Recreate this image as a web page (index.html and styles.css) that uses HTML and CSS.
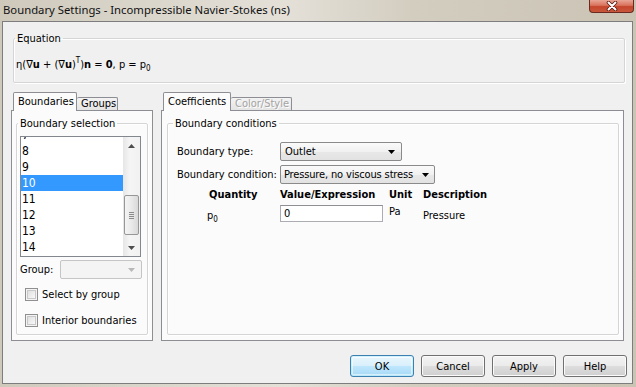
FILE: index.html
```html
<!DOCTYPE html>
<html>
<head>
<meta charset="utf-8">
<title>Boundary Settings</title>
<link rel="stylesheet" href="styles.css">
</head>
<body>
<div class="window">
  <div class="titlebar">
    <span class="title">Boundary Settings - Incompressible Navier-Stokes (ns)</span>
    <div class="close">
      <svg width="14" height="10" viewBox="0 0 14 10"><path d="M3.5 1.5 L10.5 8.5 M10.5 1.5 L3.5 8.5" stroke="#5a1a10" stroke-width="3.6" stroke-linecap="round"/><path d="M3.5 1.5 L10.5 8.5 M10.5 1.5 L3.5 8.5" stroke="#fff" stroke-width="2" stroke-linecap="round"/></svg>
    </div>
  </div>
  <div class="client">
    <fieldset class="group eq-group">
      <legend>Equation</legend>
      <div class="equation">η(∇<b>u</b> + (∇<b>u</b>)<sup>T</sup>)<b>n</b> = <b>0</b>, p = p<sub>0</sub></div>
    </fieldset>

    <div class="main">
      <section class="tabset tabset-left">
        <div class="tabs">
          <div class="tab active">Boundaries</div>
          <div class="tab">Groups</div>
        </div>
        <div class="panel">
          <fieldset class="group sel-group">
            <legend>Boundary selection</legend>
            <div class="listbox">
              <div class="items">
                <div class="items-inner">
                  <div class="item">7</div>
                  <div class="item">8</div>
                  <div class="item">9</div>
                  <div class="item selected">10</div>
                  <div class="item">11</div>
                  <div class="item">12</div>
                  <div class="item">13</div>
                  <div class="item">14</div>
                </div>
              </div>
              <div class="vscroll">
                <div class="sbtn"><svg width="7" height="4" viewBox="0 0 7 4"><path d="M0 4 L3.5 0 L7 4 Z" fill="#4d4d4d"/></svg></div>
                <div class="track">
                  <div class="thumb"><i></i><i></i><i></i><i></i></div>
                </div>
                <div class="sbtn"><svg width="7" height="4" viewBox="0 0 7 4"><path d="M0 0 L7 0 L3.5 4 Z" fill="#4d4d4d"/></svg></div>
              </div>
            </div>
            <div class="group-row">
              <span class="lbl">Group:</span>
              <div class="combo combo-disabled"><span class="combo-text"></span><svg width="7" height="4" viewBox="0 0 7 4"><path d="M0 0 L7 0 L3.5 4 Z" fill="#b8b8b8"/></svg></div>
            </div>
            <label class="check"><span class="box"></span>Select by group</label>
            <label class="check check-second"><span class="box"></span>Interior boundaries</label>
          </fieldset>
        </div>
      </section>

      <section class="tabset tabset-right">
        <div class="tabs">
          <div class="tab active">Coefficients</div>
          <div class="tab disabled">Color/Style</div>
        </div>
        <div class="panel">
          <fieldset class="group bc-group">
            <legend>Boundary conditions</legend>
            <div class="form-row first">
              <span class="form-label">Boundary type:</span>
              <div class="combo combo-type"><span class="combo-text">Outlet</span><svg width="7" height="4" viewBox="0 0 7 4"><path d="M0 0 L7 0 L3.5 4 Z" fill="#000"/></svg></div>
            </div>
            <div class="form-row">
              <span class="form-label">Boundary condition:</span>
              <div class="combo combo-cond"><span class="combo-text">Pressure, no viscous stress</span><svg width="7" height="4" viewBox="0 0 7 4"><path d="M0 0 L7 0 L3.5 4 Z" fill="#000"/></svg></div>
            </div>
            <div class="qtable">
              <div class="qh">Quantity</div>
              <div class="qh">Value/Expression</div>
              <div class="qh">Unit</div>
              <div class="qh">Description</div>
              <div class="qc qname">p<sub>0</sub></div>
              <div class="qc"><div class="input">0</div></div>
              <div class="qc qunit">Pa</div>
              <div class="qc qdesc">Pressure</div>
            </div>
          </fieldset>
        </div>
      </section>
    </div>

    <div class="buttons">
      <button class="btn btn-default">OK</button>
      <button class="btn">Cancel</button>
      <button class="btn">Apply</button>
      <button class="btn">Help</button>
    </div>
  </div>
</div>
</body>
</html>
```

FILE: styles.css
```css
* { box-sizing: border-box; }
html, body { margin: 0; padding: 0; }
body {
  width: 636px;
  height: 387px;
  overflow: hidden;
  font-family: "DejaVu Sans Condensed", "DejaVu Sans", sans-serif;
  font-stretch: condensed;
  font-size: 11px;
  color: #000;
  background: #cdc4b1;
}
.window {
  width: 636px;
  height: 387px;
  display: flex;
  flex-direction: column;
  background: linear-gradient(90deg, #cfc9bc 0%, #d9d4c9 20%, #e4e0d8 45%, #d3cdc0 65%, #cbc4b5 100%);
}
.titlebar {
  height: 21px;
  display: flex;
  justify-content: space-between;
  align-items: flex-start;
  padding-left: 3px;
}
.title {
  font-family: "Noto Sans", "Open Sans", sans-serif;
  font-stretch: normal;
  font-size: 11.3px;
  line-height: 20px;
  color: #111;
}
.close {
  width: 45px;
  height: 13px;
  margin-right: 2px;
  border: 1px solid #6a2a20;
  border-top: none;
  border-radius: 0 0 4px 4px;
  background: linear-gradient(#e9a595 0%, #d8725c 45%, #c4452c 55%, #c9573c 100%);
  display: flex;
  align-items: center;
  justify-content: center;
}
.client {
  flex: 1;
  margin: 0 3px 3px 2px;
  border: 1px solid #7d7d7d;
  background: #f0f0f0;
  display: flex;
  flex-direction: column;
}

/* group boxes */
.group {
  margin: 0;
  padding: 0;
  min-width: 0;
  border: 1px solid #d5d5d5;
  border-radius: 2px;
  box-shadow: 1px 1px 0 #fff, inset 1px 1px 0 #fff;
}
.group legend {
  padding: 0 2px;
  margin-left: 1px;
  line-height: 13px;
}
.eq-group {
  margin: 10px 7px 0 10px;
  height: 51px;
}
.eq-group legend { margin-left: 1px; }
.equation {
  padding: 12px 0 0 2px;
  font-size: 11px;
  line-height: 16px;
}
.equation sup { font-size: 8px; vertical-align: 5px; line-height: 0; }
.equation sub, .qname sub { font-size: 8px; vertical-align: -3px; line-height: 0; }

/* tabs */
.main {
  display: flex;
  margin-top: 9px;
}
.tabset { display: flex; flex-direction: column; }
.tabset-left { margin-left: 8px; width: 142px; }
.tabset-right { margin-left: 8px; width: 463px; }
.tabs {
  display: flex;
  align-items: flex-end;
  height: 18px;
  padding-left: 2px;
}
.tab {
  height: 13px;
  padding: 0 4px;
  border: 1px solid #8c8e94;
  border-bottom: none;
  border-left: none;
  background: linear-gradient(#f3f3f3, #e4e4e4);
  line-height: 12px;
  border-radius: 2px 2px 0 0;
}
.tab.active {
  position: relative;
  z-index: 1;
  height: 19px;
  margin-bottom: -1px;
  border-left: 1px solid #8c8e94;
  background: #fbfbfb;
  line-height: 17px;
  padding: 0 4px;
}
.tabset-left .tab.active { width: 64px; }
.tabset-left .tab { width: 41px; }
.tabset-right .tab.active { width: 68px; }
.tabset-right .tab { width: 61px; }
.tab.disabled {
  color: #a3a3a3;
  text-shadow: 1px 1px 0 #fff;
}
.panel {
  height: 231px;
  border: 1px solid #8c8e94;
  background: #fbfbfb;
}
.sel-group {
  margin: 6px 4px 0 4px;
  height: 218px;
}

/* listbox */
.listbox {
  margin: 6px 0 0 3px;
  width: 121px;
  height: 121px;
  border: 1px solid #828790;
  background: #fff;
  display: flex;
}
.items {
  flex: 1;
  overflow: hidden;
}
.items-inner { margin-top: -10px; }
.item {
  height: 16px;
  line-height: 16px;
  padding-left: 1px;
  font-size: 12px;
}
.item.selected {
  background: #3399ff;
  color: #fff;
}
.vscroll {
  width: 17px;
  display: flex;
  flex-direction: column;
  background: linear-gradient(90deg, #e6e6e6, #f5f5f5 40%, #f1f1f1);
}
.sbtn {
  height: 17px;
  display: flex;
  align-items: center;
  justify-content: center;
}
.track { flex: 1; }
.thumb {
  margin: 41px 1px 0 1px;
  height: 40px;
  border: 1px solid #979797;
  border-radius: 2px;
  background: linear-gradient(90deg, #f4f4f4, #e9e9e9 50%, #d9d9d9);
  display: flex;
  flex-direction: column;
  align-items: center;
  justify-content: center;
  gap: 1px;
}
.thumb i {
  display: block;
  width: 5px;
  height: 1px;
  background: #8a8a8a;
}

.group-row {
  display: flex;
  align-items: center;
  margin: 3px 0 0 3px;
  height: 19px;
}
.group-row .lbl { width: 40px; }
.combo {
  height: 19px;
  border: 1px solid #8a8a8a;
  border-radius: 2px;
  background: linear-gradient(#fafafa, #f1f1f1 50%, #e8e8e8 51%, #e2e2e2);
  display: flex;
  align-items: center;
  justify-content: space-between;
  padding: 0 6px 0 4px;
}
.combo-disabled {
  width: 82px;
  border-color: #c5c5c5;
  background: #f4f4f4;
}
.check {
  display: flex;
  align-items: center;
  margin: 9px 0 0 8px;
  height: 13px;
}
.check-second { margin-top: 13px; }
.box {
  width: 13px;
  height: 13px;
  margin-right: 4px;
  border: 1px solid #8f8f8f;
  background: linear-gradient(135deg, #d8d8d8, #f4f4f4 70%, #fff);
  box-shadow: inset 0 0 0 1px #f4f4f4, inset 0 0 0 2px #c8c8c8;
}

/* right panel */
.bc-group {
  margin: 6px 4px 0 5px;
  height: 218px;
}
.bc-group legend { margin-left: 5px; }
.form-row {
  display: flex;
  align-items: center;
  height: 19px;
  margin-top: 4px;
  padding-left: 9px;
}
.form-row.first { margin-top: 12px; }
.form-label { width: 103px; }
.combo-type { width: 122px; }
.combo-cond { width: 155px; padding-left: 3px; padding-right: 5px; letter-spacing: -0.15px; }
.qtable {
  display: grid;
  grid-template-columns: 71px 109px 34px auto;
  margin: 4px 0 0 41px;
}
.qh {
  font-weight: bold;
  line-height: 14px;
}
.qc {
  margin-top: 3px;
  height: 17px;
  line-height: 17px;
  padding-top: 2px;
}
.qname { padding-left: 0; margin-left: -2px; }
.qunit { padding-top: 0; line-height: 14px; }
.input {
  margin-top: -2px;
  width: 103px;
  height: 17px;
  border: 1px solid #abadb3;
  border-top-color: #8e8f94;
  background: #fff;
  padding-left: 3px;
  line-height: 15px;
}

/* buttons */
.buttons {
  display: flex;
  justify-content: flex-end;
  gap: 7px;
  margin-top: 14px;
  padding-right: 5px;
}
.btn {
  width: 64px;
  height: 22px;
  padding: 0;
  font-family: inherit;
  font-stretch: condensed;
  font-size: 11px;
  color: #000;
  border: 1px solid #707070;
  border-radius: 3px;
  background: linear-gradient(#f3f3f3 0%, #ebebeb 48%, #dddddd 52%, #cfcfcf 100%);
  box-shadow: inset 0 0 0 1px #fbfbfb;
}
.btn-default {
  border-color: #3c7fb1;
  background: linear-gradient(#eaf6fd 0%, #d9f0fc 48%, #bee6fd 52%, #a7d9f5 100%);
  box-shadow: inset 0 0 0 1px #48d8fb33, inset 0 0 0 2px #ffffff88;
}
```
